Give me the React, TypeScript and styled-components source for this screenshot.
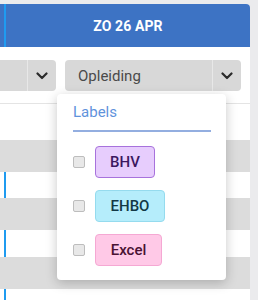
import React from 'react';
import styled, { createGlobalStyle } from 'styled-components';

const GlobalStyle = createGlobalStyle`
  html, body {
    margin: 0;
    padding: 0;
    background: #ebebed;
    font-family: Roboto, "Liberation Sans", Arial, sans-serif;
  }
`;

const Page = styled.div`
  width: 258px;
  height: 300px;
  padding-top: 4px;
  box-sizing: border-box;
  overflow: hidden;
`;

const Panel = styled.div`
  position: relative;
  width: 250px;
  height: 296px;
  background: #fff;
  border-radius: 0 4px 0 0;
  overflow: hidden;
`;

const Header = styled.div`
  display: flex;
  height: 43px;
  background: #3d73c4;
`;

const HeaderGap = styled.div`
  width: 4px;
`;

const DayCell = styled.div`
  flex: 1;
  display: flex;
  align-items: center;
  justify-content: center;
  border-left: 2px solid #1f9bf0;
  color: #fff;
  font-size: 14px;
  font-weight: 700;
  letter-spacing: 0.1px;
`;

const Toolbar = styled.div`
  display: flex;
  gap: 9px;
  padding: 13px 9px 12px 0;
  border-bottom: 1px solid #e4e4e4;
`;

const Select = styled.div<{ $width?: number }>`
  display: flex;
  height: 31px;
  background: #d8d8d8;
  border-radius: ${({ $width }) => ($width ? '0 4px 4px 0' : '4px')};
  width: ${({ $width }) => ($width ? `${$width}px` : 'auto')};
  flex: ${({ $width }) => ($width ? '0 0 auto' : '1')};
`;

const SelectValue = styled.div`
  flex: 1;
  display: flex;
  align-items: center;
  padding-left: 13px;
  font-size: 15px;
  color: #4a4a4a;
`;

const SelectArrow = styled.div`
  width: 28px;
  display: flex;
  align-items: center;
  justify-content: center;
  border-left: 1px solid #e8e8e8;
`;

const Row = styled.div<{ $shade: boolean; $height: number; $marker?: boolean }>`
  height: ${({ $height }) => $height}px;
  background: ${({ $shade }) => ($shade ? '#dcdcdc' : '#fff')};
  display: flex;
  &::before {
    content: '';
    width: 2px;
    margin-left: 4px;
    background: ${({ $marker }) => ($marker ? '#1f9bf0' : 'transparent')};
  }
`;

const Dropdown = styled.div`
  position: absolute;
  left: 57px;
  top: 90px;
  width: 169px;
  height: 186px;
  box-sizing: border-box;
  padding: 9px 15px 0 16px;
  background: #fff;
  border-radius: 4px;
  box-shadow: 0 3px 12px rgba(0, 0, 0, 0.22);
`;

const DropdownTitle = styled.div`
  font-size: 15px;
  line-height: 18px;
  color: #5f93dc;
  padding-bottom: 9px;
  border-bottom: 2px solid #93aee0;
`;

const LabelList = styled.div`
  display: flex;
  flex-direction: column;
  gap: 12px;
  padding-top: 14px;
`;

const LabelItem = styled.label`
  display: flex;
  align-items: center;
  gap: 10px;
`;

const Check = styled.span`
  width: 12px;
  height: 12px;
  box-sizing: border-box;
  border: 1px solid #bdbdbd;
  border-radius: 2px;
  background: #e8e8e8;
`;

const Tag = styled.span<{ $bg: string; $border: string; $color: string; $width: number }>`
  display: flex;
  align-items: center;
  justify-content: center;
  height: 32px;
  width: ${({ $width }) => $width}px;
  box-sizing: border-box;
  background: ${({ $bg }) => $bg};
  border: 1px solid ${({ $border }) => $border};
  border-radius: 4px;
  color: ${({ $color }) => $color};
  font-size: 15px;
  font-weight: 500;
`;

const Chevron = () => (
  <svg width="12" height="8" viewBox="0 0 12 8" fill="none">
    <path d="M1.5 1.5 L6 6 L10.5 1.5" stroke="#2b2b2b" strokeWidth="2.2" strokeLinecap="round" strokeLinejoin="round" />
  </svg>
);

const rows = [
  { shade: false, height: 36 },
  { shade: true, height: 32 },
  { shade: false, height: 26, marker: true },
  { shade: true, height: 32 },
  { shade: false, height: 27, marker: true },
  { shade: true, height: 32 },
  { shade: false, height: 20, marker: true },
];

const labels = [
  { name: 'BHV', bg: '#e7cdfd', border: '#a772dc', color: '#3b1760', width: 60 },
  { name: 'EHBO', bg: '#b5edfb', border: '#95dbee', color: '#123845', width: 70 },
  { name: 'Excel', bg: '#ffc9e7', border: '#f5a8d3', color: '#4a1233', width: 67 },
];

const App: React.FC = () => (
  <Page>
    <GlobalStyle />
    <Panel>
      <Header>
        <HeaderGap />
        <DayCell>ZO 26 APR</DayCell>
      </Header>
      <Toolbar>
        <Select $width={56}>
          <SelectValue />
          <SelectArrow>
            <Chevron />
          </SelectArrow>
        </Select>
        <Select>
          <SelectValue>Opleiding</SelectValue>
          <SelectArrow>
            <Chevron />
          </SelectArrow>
        </Select>
      </Toolbar>
      {rows.map((r, i) => (
        <Row key={i} $shade={r.shade} $height={r.height} $marker={r.marker} />
      ))}
      <Dropdown>
        <DropdownTitle>Labels</DropdownTitle>
        <LabelList>
          {labels.map(l => (
            <LabelItem key={l.name}>
              <Check />
              <Tag $bg={l.bg} $border={l.border} $color={l.color} $width={l.width}>
                {l.name}
              </Tag>
            </LabelItem>
          ))}
        </LabelList>
      </Dropdown>
    </Panel>
  </Page>
);

export default App;
